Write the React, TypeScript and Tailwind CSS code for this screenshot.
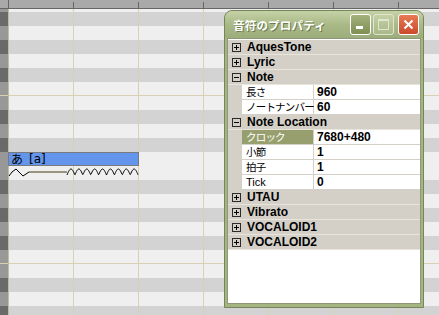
const pattern = "GLGLGLLGLGLL";
const gridX = [73, 138, 203, 268, 333, 398];

function vibratoPath() {
  // pitch line relative to the svg box (left 8, top 166)
  const d = "M1 10 L4 6 L8 3 L11 6 L15 10 L18 8 L21 6";
  const flat = "M21 6 L59 6";
  let vib = "M59 9";
  for (let x = 59; x <= 130; x += 0.5) {
    const y = 9 - 6 * Math.abs(Math.sin((Math.PI * (x - 59)) / 7.9));
    vib += ` L${x.toFixed(1)} ${y.toFixed(2)}`;
  }
  return { d, flat, vib };
}

function PlusBox({ open }: { open: boolean }) {
  return (
    <svg width="9" height="9" viewBox="0 0 9 9" className="ml-[4px] shrink-0" shapeRendering="crispEdges">
      <rect x="0.5" y="0.5" width="8" height="8" fill="none" stroke="#2b2b2b" />
      <line x1="2" y1="4.5" x2="7" y2="4.5" stroke="#000" />
      {!open && <line x1="4.5" y1="2" x2="4.5" y2="7" stroke="#000" />}
    </svg>
  );
}

function Category({ label, open = false }: { label: string; open?: boolean }) {
  return (
    <div className="flex h-[15px] items-center border-b border-[#e8e5dc] bg-[#d4d0c8]">
      <PlusBox open={open} />
      <span className="ml-[6px] text-[12px] font-bold leading-none text-black">{label}</span>
    </div>
  );
}

function Prop({ name, value, selected = false }: { name: string; value: string; selected?: boolean }) {
  const latin = /^[A-Za-z]+$/.test(name);
  return (
    <div className="flex h-[15px]">
      <div className="w-[14px] shrink-0 bg-[#d4d0c8]" />
      <div
        className={
          selected
            ? "flex w-[72px] shrink-0 items-center border-r border-b border-[#d4d0c8] bg-[#979f6e] pl-[4px] text-white"
            : "flex w-[72px] shrink-0 items-center border-r border-b border-[#d4d0c8] bg-white pl-[4px] text-black"
        }
      >
        {latin ? (
          <span className="text-[11px] leading-none">{name}</span>
        ) : (
          <span className="whitespace-nowrap font-['Noto_Sans_CJK_JP',sans-serif] text-[10.5px] leading-none tracking-[-0.8px]">
            {name}
          </span>
        )}
      </div>
      <div className="flex flex-1 items-center border-b border-[#d4d0c8] bg-white pl-[3px] text-[12px] font-bold leading-none text-black">
        {value}
      </div>
    </div>
  );
}

export default function App() {
  const { d, flat, vib } = vibratoPath();
  const rows = Array.from({ length: 22 }, (_, i) => i);
  return (
    <div className="relative h-[315px] w-[439px] overflow-hidden bg-[#efefef] font-['Liberation_Sans','Noto_Sans_CJK_JP',sans-serif]">
      {/* ruler */}
      <div className="h-[9px] border-b border-[#666] bg-[#a9a9a9]" />
      <div className="flex h-[3px]">
        <div className="w-[8px] bg-[#989898]" />
        <div className="flex-1 bg-[#efefef]" />
      </div>
      {rows.map((i) => {
        const dark = pattern[i % 12] === "G";
        const octave = i % 12 === 5;
        return (
          <div key={i} className={octave ? "flex h-[14px] border-b border-[#d8d0b0]" : "flex h-[14px]"}>
            <div className={dark ? "w-[8px] bg-[#6a6a6a]" : "w-[8px] bg-[#989898]"} />
            <div className={dark ? "flex-1 bg-[#d3d3d3]" : "flex-1 bg-[#efefef]"} />
          </div>
        );
      })}

      {/* grid lines */}
      <div className="absolute left-[8px] top-[9px] bottom-0 w-px bg-[#c4bc98]" />
      <div className="absolute left-[8px] top-0 h-[9px] w-px bg-[#666]" />
      {gridX.map((x) => (
        <div key={x}>
          <div className="absolute top-[9px] bottom-0 w-px bg-[#d8d0b0]" style={{ left: x }} />
          <div className="absolute top-[2px] h-[7px] w-px bg-[#666]" style={{ left: x }} />
        </div>
      ))}

      {/* note */}
      <div className="absolute left-[8px] top-[152px] flex h-[14px] w-[131px] items-center border border-[#7a7a7a] bg-[#6495ed] pl-[2px] font-['Noto_Sans_CJK_JP',sans-serif] text-[12px] leading-none text-black">
        <span>あ</span>
        <span className="ml-[6px] font-['DejaVu_Sans',sans-serif]">[a]</span>
      </div>
      <svg className="absolute left-[8px] top-[166px]" width="131" height="14" viewBox="0 0 131 14">
        <path d={d} fill="none" stroke="#000" strokeWidth="1" />
        <path d={flat} fill="none" stroke="#3d3a12" strokeWidth="1" />
        <path d={vib} fill="none" stroke="#000" strokeWidth="1" />
      </svg>

      {/* property window */}
      <div className="absolute left-[224px] top-[10px] flex h-[298px] w-[200px] flex-col overflow-hidden rounded-t-[8px] border border-[#75865a] bg-[#a4b582]">
        <div className="flex h-[27px] shrink-0 items-center bg-gradient-to-b from-[#c6d2a6] via-[#a9b988] to-[#9cad7b] pl-[8px] pr-[4px]">
          <span className="mt-[2px] font-['Noto_Sans_CJK_JP',sans-serif] text-[11.5px] font-bold leading-none tracking-[0.2px] text-white [text-shadow:1px_1px_0_#6b7b4b]">
            音符のプロパティ
          </span>
          <div className="ml-auto flex items-center gap-[2px]">
            <div className="flex h-[21px] w-[21px] items-end rounded-[3px] border border-white bg-gradient-to-b from-[#a3b07a] to-[#7f8f55] pb-[5px] pl-[5px]">
              <div className="h-[3px] w-[7px] bg-white" />
            </div>
            <div className="flex h-[21px] w-[21px] items-center justify-center rounded-[3px] border border-[#dfe6cc] bg-gradient-to-b from-[#c4cfa6] to-[#aab88a]">
              <div className="h-[11px] w-[11px] border border-t-2 border-[#dfe6cc]" />
            </div>
            <div className="ml-[2px] flex h-[21px] w-[21px] items-center justify-center rounded-[3px] border border-white bg-gradient-to-b from-[#e77a55] to-[#c94a2c]">
              <svg width="11" height="11" viewBox="0 0 11 11">
                <path d="M1.5 1.5 L9.5 9.5 M9.5 1.5 L1.5 9.5" stroke="#fff" strokeWidth="2" />
              </svg>
            </div>
          </div>
        </div>
        <div className="mx-[2px] mb-[3px] flex flex-1 flex-col border border-[#8e9878] bg-white pt-px">
          <Category label="AquesTone" />
          <Category label="Lyric" />
          <Category label="Note" open />
          <Prop name="長さ" value="960" />
          <Prop name="ノートナンバー" value="60" />
          <Category label="Note Location" open />
          <Prop name="クロック" value="7680+480" selected />
          <Prop name="小節" value="1" />
          <Prop name="拍子" value="1" />
          <Prop name="Tick" value="0" />
          <Category label="UTAU" />
          <Category label="Vibrato" />
          <Category label="VOCALOID1" />
          <Category label="VOCALOID2" />
        </div>
      </div>
    </div>
  );
}
